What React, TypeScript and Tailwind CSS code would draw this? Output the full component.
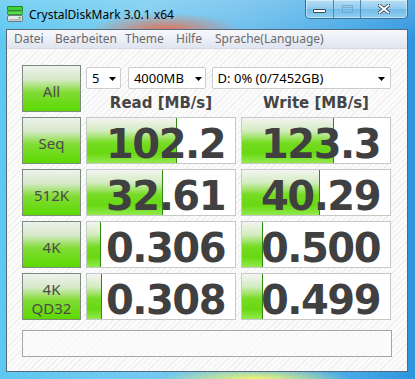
import React from "react";

const UI = "'Noto Sans', 'Open Sans', sans-serif";
const NUM = "'DejaVu Sans', Verdana, sans-serif";

function TitleIcon() {
  return (
    <svg width="17" height="17" viewBox="0 0 17 17">
      <rect x="0.5" y="0.5" width="15" height="4" rx="0.5" fill="#3fcf3f" stroke="#1f8a1f" />
      <rect x="0.5" y="5" width="15" height="3.5" rx="0.5" fill="#5ddb52" stroke="#2a9a2a" />
      <rect x="0.5" y="9.5" width="15" height="6" rx="1.5" fill="#e4e8ea" stroke="#6f7b82" />
      <rect x="2" y="13" width="12" height="1.5" fill="#a9b3b8" />
      <circle cx="12.5" cy="11.8" r="1" fill="#22c022" />
    </svg>
  );
}

function WinButtons() {
  return (
    <div className="ml-auto mr-[7px] flex h-[19px] w-[103px] overflow-hidden rounded-b-[5px] border border-t-0 border-[#3a6f99] bg-[linear-gradient(to_bottom,#b8def4_0%,#8fcaee_50%,#74bbe9_51%,#8fd0f2_100%)] shadow-[inset_0_0_0_1px_rgba(255,255,255,0.45)]">
      <div className="flex w-[28px] items-center justify-center border-r border-[#4f86ad]">
        <div className="mt-[4px] h-[4px] w-[13px] rounded-[1px] border border-[#3b4a55] bg-white" />
      </div>
      <div className="flex w-[27px] items-center justify-center border-r border-[#4f86ad]">
        <div className="h-[8px] w-[11px] border border-[#6b9dc2] opacity-70">
          <div className="mt-[1px] h-[1px] w-full bg-[#6b9dc2]" />
        </div>
      </div>
      <div className="flex flex-1 items-center justify-center">
        <svg width="12" height="10" viewBox="0 0 12 10">
          <path d="M1 1 L11 9 M11 1 L1 9" stroke="#3b4a55" strokeWidth="3.6" strokeLinecap="square" />
          <path d="M1.5 1.3 L10.5 8.7 M10.5 1.3 L1.5 8.7" stroke="#ffffff" strokeWidth="1.8" strokeLinecap="square" />
        </svg>
      </div>
    </div>
  );
}

function Combo({ w, label, arrowRight }: { w: string; label: string; arrowRight: string }) {
  return (
    <div
      className={`relative flex h-[22px] ${w} items-center rounded-[2px] border border-[#cdcdcd] bg-white pl-[5px] text-[13px] leading-[20px] text-black`}
      style={{ fontFamily: UI }}
    >
      {label}
      <svg
        className={`absolute top-[9px] ${arrowRight}`}
        width="7"
        height="4"
        viewBox="0 0 7 4"
      >
        <path d="M0 0 H7 L3.5 4 Z" fill="#000" />
      </svg>
    </div>
  );
}

function TestButton({ children }: { children: React.ReactNode }) {
  return (
    <div
      className="flex h-[47px] w-[59px] flex-col items-center justify-center border border-[#7c8c7a] bg-[linear-gradient(to_bottom,#eef1ee_0%,#d6e9c8_30%,#82dc36_58%,#5cd900_100%)] pt-[5px] text-[15px] leading-[19px] text-[#4a4a4a]"
      style={{ fontFamily: UI }}
    >
      {children}
    </div>
  );
}

function Result({ value, fill }: { value: string; fill: number }) {
  return (
    <div className="relative h-[47px] w-[150px] border border-[#c8c8c8] bg-white">
      <div
        className="absolute bottom-0 left-0 top-0 border-r border-[#2f8a12] bg-[linear-gradient(to_bottom,#f3f5f1_0%,#d4ecc2_28%,#76dc22_55%,#68d812_78%,#92ea4e_100%)]"
        style={{ width: fill }}
      />
      <div
        className="relative pr-[10px] pt-[8px] text-right text-[40px] font-bold leading-[37px] tracking-[-1.5px] text-[#404040]"
        style={{ fontFamily: NUM }}
      >
        {value}
      </div>
    </div>
  );
}

export default function App() {
  const rows = [
    { label: <span>Seq</span>, r: "102.2", rf: 90, w: "123.3", wf: 92 },
    { label: <span>512K</span>, r: "32.61", rf: 76, w: "40.29", wf: 78 },
    { label: <span>4K</span>, r: "0.306", rf: 14, w: "0.500", wf: 21 },
    {
      label: (
        <>
          <span>4K</span>
          <span>QD32</span>
        </>
      ),
      r: "0.308",
      rf: 15,
      w: "0.499",
      wf: 21,
    },
  ];

  return (
    <div className="h-[379px] w-[415px] overflow-hidden bg-[radial-gradient(ellipse_75px_17px_at_165px_30px,rgba(236,105,70,0.9),rgba(236,105,70,0)),radial-gradient(ellipse_95px_12px_at_255px_379px,rgba(240,246,110,1),rgba(240,246,110,0)),linear-gradient(to_bottom,rgba(255,255,255,0.18),rgba(255,255,255,0)_40px),linear-gradient(to_right,#5ec8f0_0%,#74caf0_35%,#68bdec_60%,#46a8e6_85%,#2f95de_100%)]">
      {/* Title bar */}
      <div className="flex h-[29px] items-start">
        <div className="ml-[7px] mt-[6px]">
          <TitleIcon />
        </div>
        <div
          className="ml-[5px] mt-[7px] text-[12px] leading-[16px] text-black"
          style={{ fontFamily: UI }}
        >
          CrystalDiskMark 3.0.1 x64
        </div>
        <WinButtons />
      </div>

      {/* Client area */}
      <div className="ml-[6px] flex h-[343px] w-[402px] flex-col border border-[#56697c] bg-[#f7f7f7]">
        {/* Menu */}
        <div
          className="flex h-[19px] items-center border-b border-[#d4d9e3] bg-[linear-gradient(to_bottom,#f7f8fc_0%,#eceff6_50%,#dfe4ef_100%)] pl-[7px] text-[12px] text-[#6a6a6a]"
          style={{ fontFamily: UI }}
        >
          <span className="w-[41px]">Datei</span>
          <span className="w-[70px]">Bearbeiten</span>
          <span className="w-[51px]">Theme</span>
          <span className="w-[39px]">Hilfe</span>
          <span>Sprache(Language)</span>
        </div>

        {/* Content */}
        <div className="flex-1 bg-[repeating-linear-gradient(-45deg,#fbfbfb_0px,#fbfbfb_3px,#efefef_3px,#efefef_4px)] pl-[15px] pt-[16px]">
          <div className="grid grid-cols-[59px_150px_150px] gap-[5px]">
            <TestButton>
              <span>All</span>
            </TestButton>
            <div className="col-span-2 flex flex-col">
              <div className="mt-[2px] flex">
                <Combo w="w-[35px]" label="5" arrowRight="right-[4px]" />
                <div className="w-[7px]" />
                <Combo w="w-[78px]" label="4000MB" arrowRight="right-[3px]" />
                <div className="w-[6px]" />
                <Combo w="w-[180px]" label="D: 0% (0/7452GB)" arrowRight="right-[5px]" />
              </div>
              <div
                className="mt-[5px] grid grid-cols-2 gap-[5px] text-center text-[15px] font-bold leading-[18px] text-[#454545]"
                style={{ fontFamily: NUM }}
              >
                <span>Read [MB/s]</span>
                <span>Write [MB/s]</span>
              </div>
            </div>

            {rows.map((row, i) => (
              <React.Fragment key={i}>
                <TestButton>{row.label}</TestButton>
                <Result value={row.r} fill={row.rf} />
                <Result value={row.w} fill={row.wf} />
              </React.Fragment>
            ))}
          </div>
          <div className="mt-[10px] h-[27px] w-[370px] border border-[#a6a6a6] bg-[#fcfcfc]/60" />
        </div>
      </div>
    </div>
  );
}
